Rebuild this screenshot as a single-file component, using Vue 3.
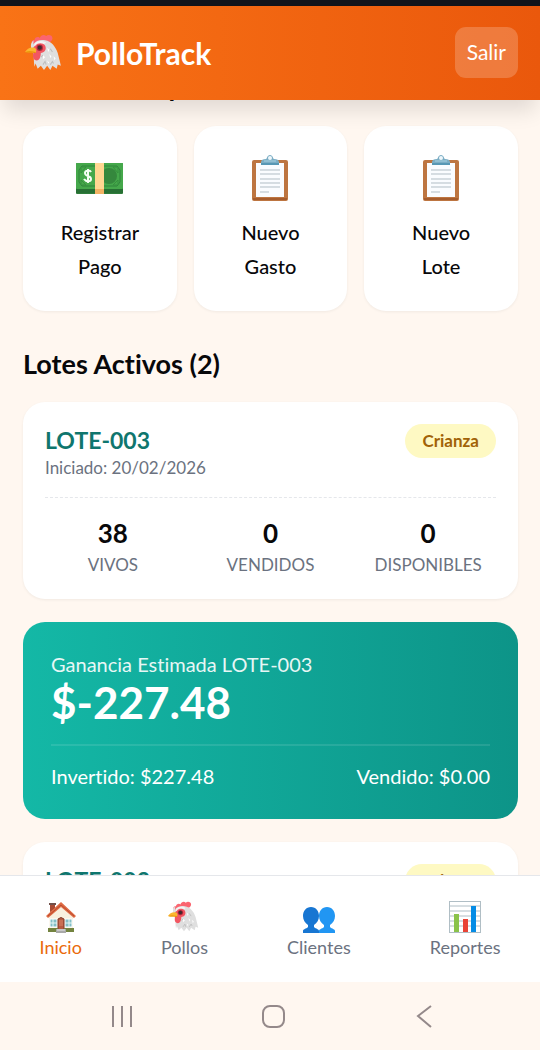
<script setup>
const actions = [
  { icon: 'cash', lines: ['Registrar', 'Pago'] },
  { icon: 'clipboard', lines: ['Nuevo', 'Gasto'] },
  { icon: 'clipboard', lines: ['Nuevo', 'Lote'] },
]

const lots = [
  {
    name: 'LOTE-003',
    started: '20/02/2026',
    status: 'Crianza',
    stats: [
      { value: 38, label: 'VIVOS' },
      { value: 0, label: 'VENDIDOS' },
      { value: 0, label: 'DISPONIBLES' },
    ],
    profit: '$-227.48',
    invested: '$227.48',
    sold: '$0.00',
  },
  { name: 'LOTE-002', status: 'Crianza' },
]

const tabs = [
  { icon: 'house', label: 'Inicio', active: true },
  { icon: 'chicken', label: 'Pollos' },
  { icon: 'people', label: 'Clientes' },
  { icon: 'chart', label: 'Reportes' },
]
</script>

<template>
  <svg class="symbols" aria-hidden="true">
    <symbol id="chicken" viewBox="0 0 36 36">
      <path d="M8 10C5 9 6 5 9 6c0-3 4-4 5-2 1-3 4-4 6-2 2-2 6-1 6 2 0 2-2 4-4 4L10 11Z" fill="#fb6570" />
      <path d="M8 10c2-4 7-5 11-4 6 1 10 6 12 12 1 4 2 8 3 12l-3-1-1 4-4-3-2 4-3-4-3 4-3-4-3 3-2-5-1 3c-1-5 0-10-2-15-2-4-2-7 1-10Z" fill="#dfdfdf" />
      <path d="M9 9c3-3 8-3 11-1l-4 3-7 1Z" fill="#f4f4f4" />
      <path d="M10 11c2-3 7-3 9 0 2 4-1 7-4 7 0 3-1 7-4 7-5-1-3-6-3-9-1-2 0-4 2-5Z" fill="#f25762" />
      <circle cx="14" cy="13" r="3" fill="#ad283c" />
      <circle cx="14" cy="13" r="2" fill="#40292c" />
      <path d="M0 17c2-3 5-5 9-4 2 1 2 3 1 5-3-1-6 0-10-1Z" fill="#fbb72f" />
      <path d="M0 17c3-1 6-1 10 0v1c-4-1-7 0-10-1Z" fill="#e58d00" />
      <path d="m21 13 2 2-1 2Zm-4 7 2 2-2 2Zm6-1 2 2-1 2Zm4 2 2 2-1 2Zm-6 4 2 2-1 1Z" fill="#fff" />
      <path d="m17 29 2-3 1 3m4 0 2-3 1 2m-12-6 2-2m7-6 2 3" fill="none" stroke="#bebebe" />
    </symbol>

    <symbol id="cash" viewBox="0 0 48 48">
      <rect x="0" y="9" width="47" height="31" rx="1" fill="#2f7d3b" />
      <path d="M0 36h47M0 38h47" stroke="#21652e" />
      <rect x="0" y="9" width="47" height="26" rx="1" fill="#45a84b" />
      <path d="M6 12h35l3 4v12l-3 4H6l-3-4V16Z" fill="none" stroke="#2f843b" stroke-width="1" />
      <path d="M6 13h4l-5 6v-5m36-1h-4l5 6v-5M6 31h4l-5-5v4m36 1h-4l5-5v4" fill="none" stroke="#37903e" />
      <circle cx="33" cy="22" r="8" fill="#35883d" />
      <path d="M19 9h9v31h-9Z" fill="#ffd792" />
      <path d="M19 35h9v5h-9Z" fill="#f2b365" />
      <path d="M15 18c-1-2-6-2-6 1 0 4 6 2 6 6 0 3-5 3-7 0m4-10v14" fill="none" stroke="#f5fff4" stroke-width="2" />
    </symbol>

    <symbol id="clipboard" viewBox="0 0 48 48">
      <rect x="6" y="6" width="36" height="41" rx="2" fill="#bd7541" />
      <path d="M7 45h34" stroke="#a65d2e" stroke-width="2" />
      <path d="M10 9h28v34H10Z" fill="#fafcff" />
      <path d="M14 16h20M14 20h20M14 25h20M14 29h20M14 33h20M14 38h9" stroke="#b1bdc5" />
      <path d="M15 11V8c0-2 2-3 5-3 1 0 1-4 4-4s3 4 4 4c3 0 5 1 5 3v3Z" fill="#7badc4" />
      <path d="M15 9h18v2H15Z" fill="#5898b5" />
      <circle cx="24" cy="4" r="2" fill="#eef7fc" />
      <path d="M18 7h12" stroke="#a8d1e1" />
    </symbol>

    <symbol id="house" viewBox="0 0 32 32">
      <path d="M5 3h5v10H5Z" fill="#a94b34" />
      <path d="M4 2h7v2H4Z" fill="#72504a" />
      <path d="M4 12 16 3l12 10v17H4Z" fill="#f8f0df" />
      <path d="M1 15 16 1l15 14-2 2L16 6 3 17Z" fill="#df6a42" />
      <path d="m3 15 13-11 13 11" fill="none" stroke="#b84b32" stroke-width="1" />
      <path d="M5 18h7v8H5Zm15 0h7v8h-7Z" fill="#82bec6" stroke="#fff" />
      <path d="M8 18v8m-3-4h7m12-4v8m-4-4h7" stroke="#e7f7f5" />
      <path d="M13 29V18q3-3 6 0v11Z" fill="#b75b40" stroke="#833d2c" />
      <path d="M15 19v6m2-6v6" stroke="#dc8569" />
      <path d="M3 27h10v4H3Zm16 0h10v4H19Z" fill="#73833f" />
      <path d="M11 28h10v4H11Z" fill="#a9a9a9" />
      <path d="M12 28h8v2h-8Z" fill="#c9c9c9" />
    </symbol>

    <symbol id="people" viewBox="0 0 32 32">
      <path d="M0 32v-2c0-2 3-2 5-4v-2c-3-2-5-5-5-9 0-5 3-9 8-9s8 4 8 9c0 4-2 7-5 9v2c2 2 5 2 5 4v2Z" fill="#1876d2" />
      <path d="M16 32v-2c0-2 3-2 5-4v-2c-3-2-5-5-5-9 0-5 3-9 8-9s8 4 8 9c0 4-2 7-5 9v2c2 2 5 2 5 4v2Z" fill="#2196f3" />
    </symbol>

    <symbol id="chart" viewBox="0 0 32 32">
      <rect x="0" y="0" width="32" height="32" fill="#b0bec5" />
      <rect x="1" y="1" width="30" height="30" fill="#fff" />
      <path d="M1 5h30M1 10h30M1 15h30M1 20h30M1 25h30" stroke="#b0bec5" />
      <path d="M5 13h5v18H5Z" fill="#8bc34a" />
      <path d="M14 18h5v13h-5Z" fill="#e94335" />
      <path d="M22 5h5v26h-5Z" fill="#058ce5" />
    </symbol>
  </svg>

  <div class="app">
    <div class="status-strip"></div>
    <header class="topbar">
      <div class="brand">
        <svg class="brand-icon" aria-hidden="true"><use href="#chicken" /></svg>
        <h1>PolloTrack</h1>
      </div>
      <button type="button" class="logout">Salir</button>
    </header>

    <main class="content">
      <h2 class="section-title scrolled">Acciones Rápidas</h2>
      <div class="actions">
        <button v-for="(action, i) in actions" :key="i" type="button" class="action">
          <svg class="action-icon" aria-hidden="true"><use :href="'#' + action.icon" /></svg>
          <span v-for="line in action.lines" :key="line">{{ line }}</span>
        </button>
      </div>

      <h2 class="section-title">Lotes Activos (2)</h2>
      <div class="lots">
        <template v-for="lot in lots" :key="lot.name">
          <article class="lot">
            <div class="lot-head">
              <div>
                <h3>{{ lot.name }}</h3>
                <p v-if="lot.started">Iniciado: {{ lot.started }}</p>
              </div>
              <span class="badge">{{ lot.status }}</span>
            </div>
            <div v-if="lot.stats" class="stats">
              <div v-for="stat in lot.stats" :key="stat.label" class="stat">
                <strong>{{ stat.value }}</strong>
                <span>{{ stat.label }}</span>
              </div>
            </div>
          </article>
          <section v-if="lot.profit" class="profit">
            <p class="profit-label">Ganancia Estimada {{ lot.name }}</p>
            <p class="profit-value">{{ lot.profit }}</p>
            <div class="profit-foot">
              <span>Invertido: {{ lot.invested }}</span>
              <span>Vendido: {{ lot.sold }}</span>
            </div>
          </section>
        </template>
      </div>
    </main>

    <nav class="tabs">
      <a v-for="tab in tabs" :key="tab.label" href="#" class="tab" :class="{ active: tab.active }">
        <svg class="tab-icon" aria-hidden="true"><use :href="'#' + tab.icon" /></svg>
        <span>{{ tab.label }}</span>
      </a>
    </nav>

    <div class="system-bar">
      <button type="button" aria-label="Recientes">
        <svg viewBox="0 0 24 24"><path d="M3 2v21M12 2v21M21 2v21" /></svg>
      </button>
      <button type="button" aria-label="Inicio del sistema">
        <svg viewBox="0 0 24 24"><rect x="2" y="2" width="21" height="21" rx="7" /></svg>
      </button>
      <button type="button" aria-label="Atrás">
        <svg viewBox="0 0 24 24"><path d="M19 2 6 12l13 11" /></svg>
      </button>
    </div>
  </div>
</template>

<style>
body {
  margin: 0;
  background: #fff7f0;
}
</style>

<style scoped>
* {
  box-sizing: border-box;
}
h1, h2, h3, p {
  margin: 0;
}
button {
  font: inherit;
  border: 0;
  padding: 0;
  cursor: pointer;
}
.symbols {
  position: absolute;
  width: 0;
  height: 0;
}
.app {
  display: flex;
  flex-direction: column;
  height: 100vh;
  font-family: Lato, "Open Sans", sans-serif;
  font-size: 20px;
  line-height: 34px;
  font-variant-ligatures: none;
  color: #08080a;
  background: #fff7f0;
}
.status-strip {
  flex: none;
  height: 6px;
  background: #12141b;
}
.topbar {
  flex: none;
  z-index: 1;
  display: flex;
  align-items: center;
  justify-content: space-between;
  padding: 21px 22px 22px 25px;
  color: #fff;
  background: linear-gradient(90deg, #f97316, #ea580c);
  box-shadow: 0 14px 20px -4px rgba(0, 0, 0, 0.12);
}
.brand {
  display: flex;
  align-items: center;
  gap: 13px;
}
.brand-icon {
  width: 38px;
  height: 38px;
}
h1 {
  font-size: 30px;
  line-height: 32px;
  font-weight: 700;
}
.logout {
  padding: 8px 12px 9px;
  border-radius: 11px;
  color: #fff;
  font-size: 21px;
  background: rgba(255, 255, 255, 0.2);
}
.content {
  flex: 1;
  min-height: 0;
  padding: 0 22px 0 23px;
  overflow-y: auto;
  scrollbar-width: none;
}
.section-title {
  margin: 36px 0 21px;
  font-size: 27px;
  font-weight: 700;
}
.section-title.scrolled {
  margin-top: -30px;
  margin-bottom: 22px;
}
.actions {
  display: grid;
  grid-template-columns: repeat(3, 1fr);
  gap: 17px;
}
.action {
  display: flex;
  flex-direction: column;
  align-items: center;
  padding: 28px 12px;
  border-radius: 22px;
  color: #08080a;
  font-weight: 500;
  background: #fff;
  box-shadow: 0 1px 3px rgba(0, 0, 0, 0.06);
}
.action-icon {
  width: 48px;
  height: 48px;
  margin-bottom: 13px;
}
.lots {
  display: flex;
  flex-direction: column;
  gap: 23px;
}
.lot {
  padding: 22px 22px 20px;
  border-radius: 22px;
  background: #fff;
  box-shadow: 0 1px 3px rgba(0, 0, 0, 0.06);
}
.lot-head {
  display: flex;
  align-items: flex-start;
  justify-content: space-between;
}
h3 {
  font-size: 23px;
  line-height: 32px;
  font-weight: 700;
  color: #0f766e;
}
.lot-head p {
  font-size: 17px;
  line-height: 24px;
  color: #6b7280;
}
.badge {
  padding: 0 17px;
  border-radius: 17px;
  font-size: 17px;
  font-weight: 700;
  color: #a16207;
  background: #fef9c3;
}
.stats {
  display: grid;
  grid-template-columns: repeat(3, 1fr);
  gap: 22px;
  margin-top: 17px;
  padding-top: 18px;
  border-top: 1px dashed #e5e7eb;
}
.stat {
  display: flex;
  flex-direction: column;
  align-items: center;
  gap: 1px;
}
.stat strong {
  font-size: 26px;
}
.stat span {
  font-size: 17px;
  line-height: 28px;
  color: #6b7280;
}
.profit {
  padding: 28px;
  border-radius: 22px;
  color: #fff;
  background: linear-gradient(90deg, #14b8a6, #0d9488);
}
.profit-label {
  line-height: 28px;
  opacity: 0.9;
}
.profit-value {
  font-size: 44px;
  line-height: 48px;
  font-weight: 700;
}
.profit-foot {
  display: flex;
  justify-content: space-between;
  margin-top: 18px;
  padding-top: 15px;
  border-top: 2px solid rgba(255, 255, 255, 0.1);
  line-height: 30px;
}
.tabs {
  flex: none;
  z-index: 1;
  display: flex;
  justify-content: space-around;
  padding: 25px 0 20px;
  border-top: 1px solid #e5e7eb;
  background: #fff;
}
.tab {
  display: flex;
  flex-direction: column;
  align-items: center;
  font-size: 18px;
  line-height: 29px;
  color: #6b7280;
  text-decoration: none;
}
.tab.active {
  color: #ea6a0c;
}
.tab-icon {
  width: 32px;
  height: 32px;
}
.system-bar {
  flex: none;
  display: flex;
  justify-content: center;
  gap: 127px;
  padding: 22px 0 22px 5px;
}
.system-bar button {
  width: 24px;
  height: 24px;
  background: none;
}
.system-bar svg {
  display: block;
  width: 24px;
  height: 24px;
  fill: none;
  stroke: #94898a;
  stroke-width: 2;
}
</style>
